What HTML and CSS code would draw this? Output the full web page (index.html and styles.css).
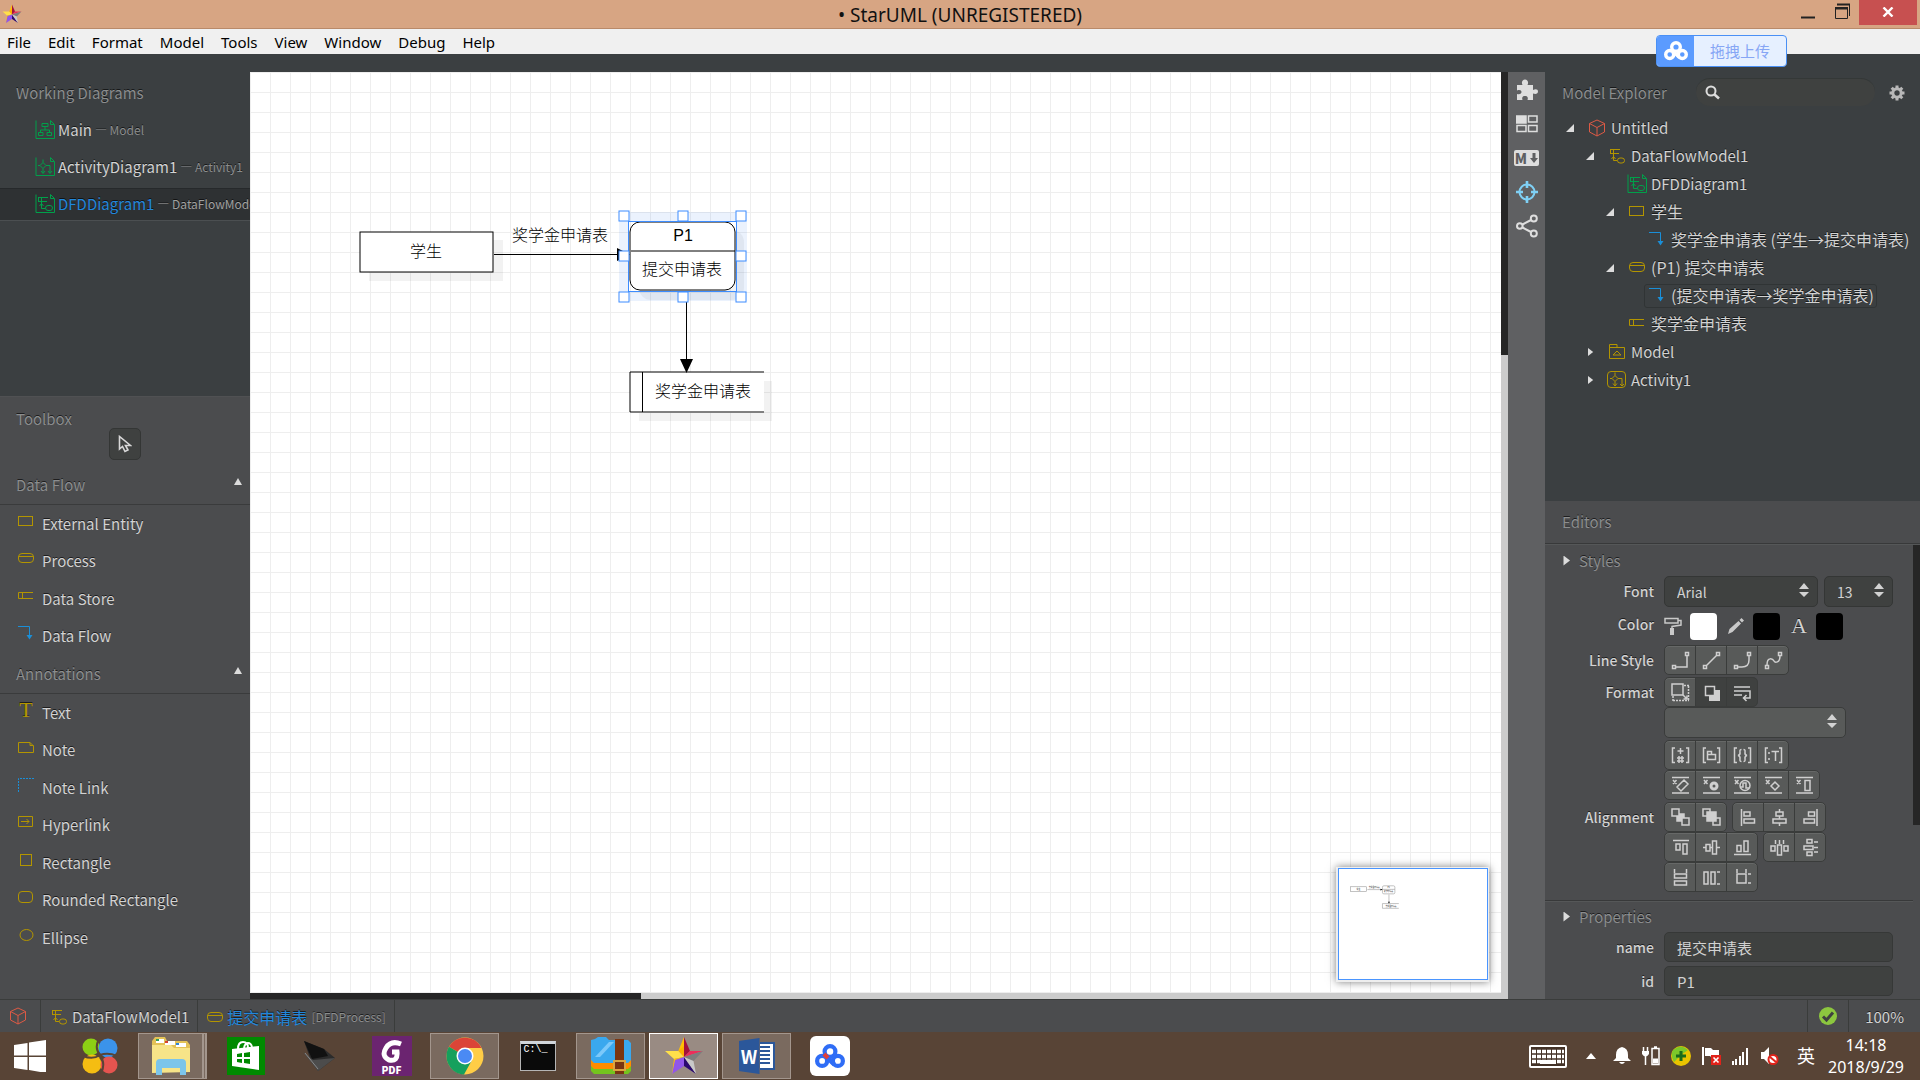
FILE: index.html
```html
<!DOCTYPE html>
<html lang="zh-CN">

<head>
    <meta charset="UTF-8" />
    <meta name="viewport" content="width=device-width, initial-scale=1.0" />
    <title>StarUML (UNREGISTERED)</title>
    <link rel="stylesheet" href="styles.css">
</head>

<body>

    <!-- shared icons -->
    <svg class="sprite" aria-hidden="true">
        <symbol id="i-star" viewBox="0 0 40 40">
            <path d="M20 1V21L14.500 14.500Z" fill="#ffc107" />
            <path d="M20 1V21L26 15Z" fill="#a3123c" />
            <path d="M1 15H14.500L20 21L10 23Z" fill="#ffe04a" />
            <path d="M14.500 14.500L20 21V10Z" fill="#ffb300" />
            <path d="M39 15H26L20 21Z" fill="#ec2d5b" />
            <path d="M39 15L20 21L29.500 25Z" fill="#7d7d7d" />
            <path d="M10 23L20 21L8 38Z" fill="#ffc107" />
            <path d="M20 21V30L8 38L11 24Z" fill="#9156ea" />
            <path d="M20 21V30L32 38Z" fill="#2b0a70" />
            <path d="M20 21L29.500 25L32 38Z" fill="#c9c9c9" />
        </symbol>
        <symbol id="i-cube" viewBox="0 0 18 18">
            <path d="M9 1L16.500 4.500V13L9 17L1.500 13V4.500ZM1.500 4.500L9 8.500L16.500 4.500M9 8.500V17" />
        </symbol>
        <symbol id="i-dfm" viewBox="0 0 18 18">
            <path d="M2 2.500H12M2 6.500H11M2.500 2V7M5.500 2V13.500H9M5.500 9.500L3.500 12M5.500 9.500L7.500 12" />
            <rect x="9.500" y="11" width="7" height="5" rx="2.500" />
        </symbol>
        <symbol id="i-dfd" viewBox="0 0 20 20">
            <path d="M1 .5V18.500H19.500V5M15.500 .5V4.500H19.500L15.500 .5" />
            <path d="M3 3.500H13M3 7.500H12M3.500 3V8M6.500 3V14.500H10M6.500 9.500L4.500 12M6.500 9.500L8.500 12" />
            <rect x="10.500" y="11.500" width="7" height="5" rx="2.500" />
        </symbol>
        <symbol id="i-class" viewBox="0 0 20 20">
            <path d="M1 .5V18.500H19.500V5M15.500 .5V4.500H19.500L15.500 .5" />
            <path d="M7 3.500H13V6.500H7ZM10 6.500V10M5.500 12V10H14.500V12M3.500 12.500H8V15.500H3.500ZM12 12.500H16.500V15.500H12Z" />
        </symbol>
        <symbol id="i-activity" viewBox="0 0 20 20">
            <path d="M1 .5V18.500H19.500V5M15.500 .5V4.500H19.500L15.500 .5" />
            <path d="M8 2.500V5.500L11 8.500L8 11.500L5 8.500L8 5.500M8 11.500V16M6 14L8 16.500L10 14M3 8.500H5M11 8.500H15V16M13 14L15 16.500L17 14" />
        </symbol>
        <symbol id="i-rect" viewBox="0 0 16 16">
            <rect x=".5" y="3.500" width="14" height="9" />
        </symbol>
        <symbol id="i-process" viewBox="0 0 16 16">
            <rect x=".5" y="3.500" width="15" height="9" rx="3.500" />
            <path d="M.5 6.500H15.500" />
        </symbol>
        <symbol id="i-store" viewBox="0 0 16 16">
            <path d="M15 4.500H.5V10.500H15M4.500 4.500V10.500" />
        </symbol>
        <symbol id="i-flow" viewBox="0 0 16 16">
            <path d="M0 1.500H11.500V12" />
            <path d="M8.500 10H14.500L11.500 14.500Z" fill="currentColor" stroke="none" />
        </symbol>
        <symbol id="i-updown" viewBox="0 0 10 14">
            <path d="M0 6L5 0L10 6ZM0 9H10L5 14Z" fill="currentColor" stroke="none" />
        </symbol>
        <symbol id="i-gear" viewBox="0 0 16 16">
            <circle cx="8" cy="8" r="4.200" fill="none" stroke="currentColor" stroke-width="3" />
            <path d="M8 .5V3M8 13V15.500M.5 8H3M13 8H15.500M2.700 2.700L4.500 4.500M11.500 11.500L13.300 13.300M2.700 13.300L4.500 11.500M11.500 4.500L13.300 2.700" stroke="currentColor" stroke-width="3" />
        </symbol>
        <symbol id="i-cloud" viewBox="0 0 24 20">
            <g fill="none" stroke="currentColor" stroke-width="3.400">
                <circle cx="12" cy="6" r="4.300" />
                <circle cx="5.700" cy="13.500" r="4" />
                <circle cx="18.300" cy="13.500" r="4" />
                <path d="M9 10.500L15.500 16.500" />
            </g>
        </symbol>
    </svg>

    <header class="titlebar">
        <svg class="app-icon"><use href="#i-star" /></svg>
        <h1>• StarUML (UNREGISTERED)</h1>
        <div class="window-buttons">
            <button aria-label="Minimize"><svg width="14" height="16"><path d="M0 14.500H14" stroke="#222" stroke-width="2" /></svg></button>
            <button aria-label="Restore"><svg width="15" height="16" fill="none" stroke="#222"><path d="M.5 4.500H12.500V15.500H.5ZM.5 6H12.500M2.500 1.500H14.500V13" stroke-width="1" /><path d="M0 5H13M2 1.500H15" stroke-width="2" /></svg></button>
            <button class="close" aria-label="Close"><svg width="12" height="10"><path d="M1.500 .5L10.500 9.500M10.500 .5L1.500 9.500" stroke="#fff" stroke-width="2.400" /></svg></button>
        </div>
    </header>

    <nav class="menubar">
        <a href="#">File</a>
        <a href="#">Edit</a>
        <a href="#">Format</a>
        <a href="#">Model</a>
        <a href="#">Tools</a>
        <a href="#">View</a>
        <a href="#">Window</a>
        <a href="#">Debug</a>
        <a href="#">Help</a>
    </nav>

    <button class="upload-badge">
        <span class="upload-icon"><svg width="24" height="20"><use href="#i-cloud" /></svg></span>
        <span class="upload-text">拖拽上传</span>
    </button>

    <main class="app">

        <aside class="sidebar-left">
            <section class="working">
                <h2>Working Diagrams</h2>
                <ul>
                    <li><svg class="icon-20 green"><use href="#i-class" /></svg>Main <small>— Model</small></li>
                    <li><svg class="icon-20 green"><use href="#i-activity" /></svg>ActivityDiagram1 <small>— Activity1</small></li>
                    <li class="selected"><svg class="icon-20 green"><use href="#i-dfd" /></svg><span>DFDDiagram1</span> <small>— DataFlowModel1</small></li>
                </ul>
            </section>

            <section class="toolbox">
                <h2>Toolbox</h2>
                <button class="select-tool" aria-label="Select">
                    <svg width="14" height="18" fill="none" stroke="#d8d8d8" stroke-width="1.600"><path d="M1.500 1.500V14L4.500 11.500L7 16.500L10 15L7.500 10.500H12.500Z" /></svg>
                </button>

                <h3>Data Flow <i class="tri-up"></i></h3>
                <ul class="tools">
                    <li><svg class="icon-16 yellow"><use href="#i-rect" /></svg>External Entity</li>
                    <li><svg class="icon-16 yellow"><use href="#i-process" /></svg>Process</li>
                    <li><svg class="icon-16 yellow"><use href="#i-store" /></svg>Data Store</li>
                    <li><svg class="icon-16 blue"><use href="#i-flow" /></svg>Data Flow</li>
                </ul>

                <h3>Annotations <i class="tri-up"></i></h3>
                <ul class="tools">
                    <li><span class="glyph-t">T</span>Text</li>
                    <li><svg class="icon-16 yellow"><path d="M.5 3.500H12L15.500 7V13.500H.5ZM12 3.500V6.500H15.500" /></svg>Note</li>
                    <li><svg class="icon-16 blue"><path d="M.5 15V1.500H16" stroke-dasharray="2 1" /></svg>Note Link</li>
                    <li><svg class="icon-16 yellow"><path d="M.5 2.500H14.500V12.500H.5ZM3 7.500H11M8.500 5L11 7.500L8.500 10" /></svg>Hyperlink</li>
                    <li><svg class="icon-16 yellow"><rect x="2.500" y="2.500" width="11" height="11" /></svg>Rectangle</li>
                    <li><svg class="icon-16 yellow"><rect x=".5" y="2.500" width="14" height="11" rx="3.500" /></svg>Rounded Rectangle</li>
                    <li><svg class="icon-16 yellow"><ellipse cx="8.500" cy="8" rx="6.500" ry="5.500" /></svg>Ellipse</li>
                </ul>
            </section>
        </aside>

        <section class="editor">
            <div class="canvas">
                <svg class="diagram">
                    <g class="shadow">
                        <rect x="119" y="168" width="134" height="41" />
                        <rect x="389" y="158" width="105" height="70" rx="12" />
                        <rect x="389" y="309" width="133" height="40" />
                    </g>
                    <g class="shape">
                        <rect x="110" y="160" width="133" height="40" />
                        <path d="M244 182.500H374" />
                        <path d="M436.500 220V290" />
                        <rect x="380" y="150" width="105" height="68" rx="10" />
                        <path d="M381 179H485" />
                        <rect class="fill" x="380" y="300" width="134" height="41" />
                        <path d="M514 300H380V340H514M392.500 300V340" />
                    </g>
                    <path d="M367 176L380 182.500L367 189ZM430 287H443L436.500 301Z" />
                    <text x="176" y="185">学生</text>
                    <text x="310" y="169">奖学金申请表</text>
                    <text x="433" y="169">P1</text>
                    <text x="432" y="203">提交申请表</text>
                    <text x="453" y="325">奖学金申请表</text>
                    <path class="halo" d="M369 140H497V229H369ZM379 150V220H487V150Z" />
                    <g class="selection">
                        <rect x="378.500" y="149.500" width="108" height="70" />
                        <rect class="handle" x="369" y="139" width="10" height="10" />
                        <rect class="handle" x="428" y="139" width="10" height="10" />
                        <rect class="handle" x="486" y="139" width="10" height="10" />
                        <rect class="handle" x="369" y="179" width="10" height="10" />
                        <rect class="handle" x="486" y="179" width="10" height="10" />
                        <rect class="handle" x="369" y="220" width="10" height="10" />
                        <rect class="handle" x="428" y="220" width="10" height="10" />
                        <rect class="handle" x="486" y="220" width="10" height="10" />
                    </g>
                </svg>
                <div class="minimap">
                    <svg viewBox="0 0 1250 925">
                        <g fill="#fff" stroke="#999" stroke-width="5">
                            <rect x="97" y="150" width="134" height="41" />
                            <path d="M240 174H370M422 215V290" />
                            <rect x="367" y="142" width="105" height="68" rx="12" />
                            <path d="M367 172H472" />
                            <path d="M505 292H367V332H505" />
                        </g>
                        <path d="M350 166L368 174L350 182ZM414 276H430L422 292Z" />
                        <text x="164" y="176">学生</text>
                        <text x="298" y="162">奖学金申请表</text>
                        <text x="420" y="162">P1</text>
                        <text x="420" y="194">提交申请表</text>
                        <text x="440" y="318">奖学金申请表</text>
                    </svg>
                </div>
            </div>
            <div class="scroll-v"></div>
            <div class="scroll-h"></div>
        </section>

        <nav class="toolbar">
            <button aria-label="Extensions">
                <svg width="22" height="22" viewBox="0 0 22 22"><path d="M1 6H6.500C5 3 6.500 .5 9 .5S13 3 11.500 6H17V11C20 9.500 22 10.500 22 12.500S20 15.500 17 14.500V21H11.500C12.500 18 11 17 9 17S5.500 18 6.500 21H1V15C4 16 5.500 14.500 5.500 13S4 10.500 1 11.500Z" fill="#dedede" /></svg>
            </button>
            <button aria-label="Layout">
                <svg width="22" height="18" viewBox="0 0 22 18" fill="none" stroke="#dedede" stroke-width="1.500"><path d="M.5 1H10V8H.5Z" fill="#dedede" /><path d="M12.500 1H21V7H12.500ZM1 10.500H10V16.500H1ZM12.500 10.500H21V16.500H12.500Z" /></svg>
            </button>
            <button class="md" aria-label="Markdown">M<svg width="8" height="10"><path d="M2.500 0H5.500V5H8L4 10L0 5H2.500Z" fill="#5f6062" /></svg></button>
            <button aria-label="Navigator">
                <svg width="22" height="22" viewBox="0 0 22 22" fill="none" stroke="#7fd0f5" stroke-width="2"><circle cx="11" cy="11" r="7.500" /><path d="M11 0V7M11 15V22M0 11H7M15 11H22" stroke-width="2.600" /></svg>
            </button>
            <button aria-label="Relationships">
                <svg width="22" height="24" viewBox="0 0 22 24" fill="none" stroke="#dedede" stroke-width="2"><circle cx="3.800" cy="12" r="2.800" /><circle cx="17.800" cy="4.500" r="3" /><circle cx="17.800" cy="19.500" r="3" /><path d="M6.500 10.500L15 6M6.500 13.500L15 18" /></svg>
            </button>
        </nav>

        <aside class="sidebar-right">
            <section class="explorer">
                <div class="explorer-head">
                    <h2>Model Explorer</h2>
                    <label class="search">
                        <svg width="15" height="15" fill="none" stroke="#dcdcdc"><circle cx="6" cy="6" r="4.500" stroke-width="2" /><path d="M9.500 9.500L14 13.500" stroke-width="2.600" /></svg>
                        <input type="text" aria-label="Search">
                    </label>
                    <button class="gear" aria-label="Settings"><svg width="16" height="16"><use href="#i-gear" /></svg></button>
                </div>

                <ul class="tree">
                    <li>
                        <div class="row"><i class="tri-open"></i><span class="item"><svg class="icon-18 red"><use href="#i-cube" /></svg>Untitled</span></div>
                        <ul>
                            <li>
                                <div class="row"><i class="tri-open"></i><span class="item"><svg class="icon-18 yellow"><use href="#i-dfm" /></svg>DataFlowModel1</span></div>
                                <ul>
                                    <li><div class="row"><i></i><span class="item"><svg class="icon-20 green"><use href="#i-dfd" /></svg>DFDDiagram1</span></div></li>
                                    <li>
                                        <div class="row"><i class="tri-open"></i><span class="item han"><svg class="icon-16 yellow"><use href="#i-rect" /></svg>学生</span></div>
                                        <ul>
                                            <li><div class="row"><i></i><span class="item han"><svg class="icon-16 blue"><use href="#i-flow" /></svg>奖学金申请表 (学生→提交申请表)</span></div></li>
                                        </ul>
                                    </li>
                                    <li>
                                        <div class="row"><i class="tri-open"></i><span class="item han"><svg class="icon-16 yellow"><use href="#i-process" /></svg>(P1) 提交申请表</span></div>
                                        <ul>
                                            <li><div class="row"><i></i><span class="item han current"><svg class="icon-16 blue"><use href="#i-flow" /></svg>(提交申请表→奖学金申请表)</span></div></li>
                                        </ul>
                                    </li>
                                    <li><div class="row"><i></i><span class="item han"><svg class="icon-16 yellow"><use href="#i-store" /></svg>奖学金申请表</span></div></li>
                                </ul>
                            </li>
                            <li><div class="row"><i class="tri-right"></i><span class="item"><svg class="icon-18 yellow"><path d="M1.500 15.500V1.500H9V4.500H16.500V15.500ZM1.500 4.500H9M5 12L9 8L13 12Z" /></svg>Model</span></div></li>
                            <li><div class="row"><i class="tri-right"></i><span class="item"><svg class="icon-20 yellow"><rect x=".5" y="1.500" width="18" height="16" rx="3.500" /><path d="M8 2.500V5.500L11 8.500L8 11.500L5 8.500L8 5.500M8 11.500V15.500M6 13.500L8 16L10 13.500M11 8.500H15V16M13 14L15 16L17 14M3 8.500H5" /></svg>Activity1</span></div></li>
                        </ul>
                    </li>
                </ul>
            </section>

            <section class="editors">
                <h2>Editors</h2>
                <div class="editors-body">
                    <div class="forms">
                        <h3><i class="tri-right"></i>Styles</h3>
                        <div class="field">
                            <label for="font">Font</label>
                            <div class="controls">
                                <div class="select font-name">
                                    <select id="font"><option>Arial</option></select>
                                    <svg><use href="#i-updown" /></svg>
                                </div>
                                <div class="select font-size">
                                    <select aria-label="Font size"><option>13</option></select>
                                    <svg><use href="#i-updown" /></svg>
                                </div>
                            </div>
                        </div>
                        <div class="field">
                            <span class="label">Color</span>
                            <div class="controls colors">
                                <svg width="18" height="18" fill="none" stroke="#c9c9c9" stroke-width="1.500"><path d="M1 1.500H14V6H1ZM14 3.500H17V8L8 9.500V11" /><path d="M6 11H10V18H6Z" fill="#c9c9c9" stroke="none" /></svg>
                                <button class="swatch white" aria-label="Fill color"></button>
                                <svg width="18" height="18" fill="#c9c9c9"><path d="M1 17L2.500 12L11.500 4L14 6.500L5.500 15ZM12.500 3L14.500 1L17 3.500L15 5.500Z" /></svg>
                                <button class="swatch" aria-label="Line color"></button>
                                <span class="glyph-a">A</span>
                                <button class="swatch" aria-label="Text color"></button>
                            </div>
                        </div>
                        <div class="field">
                            <span class="label">Line Style</span>
                            <div class="controls">
                                <div class="group">
                                    <button aria-label="Rectilinear"><svg><path d="M1.500 14.500H4.500V17.500H1.500ZM14.500 1.500H17.500V4.500H14.500ZM5 16H16V5" /></svg></button>
                                    <button aria-label="Oblique"><svg><path d="M1.500 14.500H4.500V17.500H1.500ZM14.500 1.500H17.500V4.500H14.500ZM4.500 14.500L14.500 4.500" /></svg></button>
                                    <button aria-label="Rounded rectilinear"><svg><path d="M1.500 14.500H4.500V17.500H1.500ZM14.500 1.500H17.500V4.500H14.500ZM5 16H9Q16 16 16 9V5" /></svg></button>
                                    <button aria-label="Curved"><svg><path d="M1.500 14.500H4.500V17.500H1.500ZM14.500 1.500H17.500V4.500H14.500ZM3 14C3 5 9 8 10 10S16 12 16 5" /></svg></button>
                                </div>
                            </div>
                        </div>
                        <div class="field">
                            <span class="label">Format</span>
                            <div class="controls stacked">
                                <div class="group">
                                    <button aria-label="Auto resize"><svg><path d="M1 1H12V12H1Z" /><path d="M13 2.500H18M2 17.500H18M17.500 3V17M2 13V18" stroke-dasharray="2 1" /><path d="M12 12L16 16M16 12.500V16H12.500" /></svg></button>
                                    <button class="on" aria-label="Shadow"><svg><path d="M7 7H18V18H7Z" fill="#cfcfcf" stroke="none" /><path d="M3.500 3.500H12.500V12.500H3.500Z" fill="#3f4140" /></svg></button>
                                    <button class="on" aria-label="Word wrap"><svg><path d="M1 4H17M1 8H17V15H11M13.500 12L10.500 15L13.500 18M1 12H9" /></svg></button>
                                </div>
                                <div class="select stereotype">
                                    <select aria-label="Stereotype display"><option></option></select>
                                    <svg><use href="#i-updown" /></svg>
                                </div>
                                <div class="group">
                                    <button aria-label="Visibility"><svg><path d="M4 2H1.500V16.500H4M15 2H17.500V16.500H15M6.500 5H12.500M9.500 2V8M8 10V17M11 10V17M6 12H13M6 15H13" /></svg></button>
                                    <button aria-label="Namespace"><svg><path d="M4 2H1.500V16.500H4M15 2H17.500V16.500H15M5.500 13.500V5.500H9.500V8.500H13.500V13.500ZM5.500 8.500H9.500" /></svg></button>
                                    <button aria-label="Property"><svg><path d="M4 2H1.500V16.500H4M15 2H17.500V16.500H15M8.500 3.500Q6.500 3.500 7 6Q7.500 9 5 9.500Q7.500 10 7 13Q6.500 15.500 8.500 15.500M10.500 3.500Q12.500 3.500 12 6Q11.500 9 14 9.500Q11.500 10 12 13Q12.500 15.500 10.500 15.500" /></svg></button>
                                    <button aria-label="Type"><svg><path d="M4 2H1.500V16.500H4M15 2H17.500V16.500H15M7.500 5.500H15M11.500 5.500V15M5 6V8M5 12V14" /></svg></button>
                                </div>
                                <div class="group">
                                    <button aria-label="Suppress attributes"><svg><path d="M1 1.500H18M1 17H18M2 4L5.500 8M5.500 4L2 8M6 11L13 4L17 8L10 15Z" /></svg></button>
                                    <button aria-label="Suppress operations"><svg><path d="M1 1.500H18M1 17H18M2 4L5.500 8M5.500 4L2 8" /><circle cx="12" cy="10" r="3" stroke-width="3" /></svg></button>
                                    <button aria-label="Suppress receptions"><svg><path d="M1 1.500H18M1 17H18M2 4L5.500 8M5.500 4L2 8M7.500 11H10V7H13V12H16" /><circle cx="12" cy="9.500" r="5" /></svg></button>
                                    <button aria-label="Suppress literals"><svg><path d="M1 1.500H18M1 17H18M2 4L5.500 8M5.500 4L2 8M7 10L11 6L15 10L11 14Z" /></svg></button>
                                    <button aria-label="Suppress columns"><svg><path d="M1 1.500H18M1 17H18M2 4L5.500 8M5.500 4L2 8M10 4.500H15V14.500H10Z" /></svg></button>
                                </div>
                            </div>
                        </div>
                        <div class="field">
                            <span class="label">Alignment</span>
                            <div class="controls stacked">
                                <div class="groups">
                                    <div class="group">
                                        <button aria-label="Send to back"><svg><path d="M6 6H13V13H6Z" fill="#cfcfcf" /><path d="M1 1H8V8H1ZM11 10H18V17H11Z" fill="#585a59" /></svg></button>
                                        <button aria-label="Bring to front"><svg><path d="M1 1H8V8H1ZM11 10H18V17H11Z" /><path d="M5 4H14V13H5Z" fill="#cfcfcf" /></svg></button>
                                    </div>
                                    <div class="group">
                                        <button aria-label="Align left"><svg><path d="M2.500 1V18M5 4H11V8H5ZM5 11H15.500V15H5Z" /></svg></button>
                                        <button aria-label="Align center"><svg><path d="M9.500 1V4M9.500 8V11M9.500 15V18M6 4H13V8H6ZM3 11H16V15H3Z" /></svg></button>
                                        <button aria-label="Align right"><svg><path d="M16 1V18M7.500 4H13.500V8H7.500ZM3 11H13.500V15H3Z" /></svg></button>
                                    </div>
                                </div>
                                <div class="groups">
                                    <div class="group">
                                        <button aria-label="Align top"><svg><path d="M2 2.500H18M5 6H9V12H5ZM12 6H16V16H12Z" /></svg></button>
                                        <button aria-label="Align middle"><svg><path d="M1 9.500H4M8 9.500H10M14 9.500H18M4 6.500H8V13H4ZM10.500 3H14.500V16H10.500Z" /></svg></button>
                                        <button aria-label="Align bottom"><svg><path d="M1 16.500H18M4 7.500H8V13.500H4ZM11 3H15V13.500H11Z" /></svg></button>
                                    </div>
                                    <div class="group">
                                        <button aria-label="Space equally, horizontally"><svg><path d="M1 8H5V13H1ZM7.500 7H11.500V17H7.500ZM14 8H18V13H14ZM5.500 2V6M9.500 2V6M13.500 2V6" /></svg></button>
                                        <button aria-label="Space equally, vertically"><svg><path d="M6 1.500H11V5H6ZM3 8H12V11.500H3ZM6 14H11V17.500H6ZM13 4H17M13 9.500H17M13 14H17" /></svg></button>
                                    </div>
                                </div>
                                <div class="group">
                                    <button aria-label="Set width equally"><svg><path d="M3.500 1V5M15.500 1V5M3.500 6H15.500V10H3.500ZM3.500 13H15.500V17H3.500Z" /></svg></button>
                                    <button aria-label="Set height equally"><svg><path d="M2 4H6V16H2ZM9 4H13V16H9ZM15 4H18M15 16H18" /></svg></button>
                                    <button aria-label="Set size equally"><svg><path d="M4 1V5M13 1V5M4 6H13V15H4ZM15 6H18M15 15H18" /></svg></button>
                                </div>
                            </div>
                        </div>

                        <h3 class="divided"><i class="tri-right"></i>Properties</h3>
                        <div class="field property">
                            <label for="prop-name">name</label>
                            <input id="prop-name" type="text" value="提交申请表">
                        </div>
                        <div class="field property">
                            <label for="prop-id">id</label>
                            <input id="prop-id" type="text" value="P1">
                        </div>
                    </div>
                    <div class="scroll-editors"></div>
                </div>
            </section>
        </aside>
    </main>

    <footer class="statusbar">
        <a class="crumb" href="#" aria-label="Project"><svg class="icon-18 red"><use href="#i-cube" /></svg></a>
        <a class="crumb" href="#"><svg class="icon-18 yellow"><use href="#i-dfm" /></svg>DataFlowModel1</a>
        <a class="crumb active" href="#"><svg class="icon-16 yellow"><use href="#i-process" /></svg><span>提交申请表</span> <small>[DFDProcess]</small></a>
        <span class="validity"><svg width="18" height="18"><circle cx="9" cy="9" r="9" fill="#8cc63f" /><path d="M4 9.500L7.500 13L14 5.500" fill="none" stroke="#3f4140" stroke-width="3" /></svg></span>
        <span class="zoom">100%</span>
    </footer>

    <footer class="taskbar">
        <button class="start" aria-label="Start">
            <svg width="32" height="32" fill="#fff"><path d="M0 5L13.500 3V15.500H0ZM15 2.500L32 0V15.500H15ZM0 17H13.500V30L0 28ZM15 17H32V33L15 30Z" /></svg>
        </button>
        <button class="task" aria-label="Browser">
            <svg width="36" height="36"><circle cx="9" cy="9" r="8.500" fill="#8ccf14" /><circle cx="26" cy="10" r="9.500" fill="#3b93ea" /><circle cx="10" cy="26" r="9.500" fill="#f5bd12" /><circle cx="27" cy="27" r="8.500" fill="#e5544f" /><path d="M17 1Q12 10 18 17Q26 14 35 18M18 17Q11 22 1 18M18 17Q24 25 19 36" fill="none" stroke="#584436" stroke-width="2" /></svg>
        </button>
        <button class="task open stack" aria-label="File Explorer">
            <svg width="40" height="38"><path d="M1 4L4 0H14L16 4H36L39 8V35H1Z" fill="#e3c257" /><path d="M5 2H13V6H5ZM14 4H24V8H14ZM25 6H35V10H25Z" fill="#fff" /><path d="M5 2H8V4H5Z" fill="#2e9f5b" /><path d="M14 4H17V6H14Z" fill="#d9432f" /><path d="M25 6H28V8H25Z" fill="#2f86d9" /><path d="M1 8H20L23 11H39V35L1 36Z" fill="#f7e488" /><path d="M5 38V26Q5 22 9 22H31Q35 22 35 26V38H29V31H11V38Z" fill="#7cc5ea" /></svg>
        </button>
        <button class="task" aria-label="Store">
            <svg width="38" height="38"><path d="M0 0H38V38H0Z" fill="#008a00" /><path d="M5 12L32 9V33L5 29Z" fill="#fff" /><path d="M11 12Q11 5 16 5T21 11M17 11Q18 6 21 6T25 10" fill="none" stroke="#fff" stroke-width="2" /><path d="M10 17L15 16V20H10ZM17 16L23 15V20H17ZM10 22H15V26L10 25ZM17 22H23V27L17 26Z" fill="#008a00" /></svg>
        </button>
        <button class="task" aria-label="Laptop">
            <svg width="34" height="32"><path d="M2 1L22 9L33 18L16 31L9 21Z" fill="#2b2b2b" /><path d="M2 1L22 9L26 16L10 19Z" fill="#111" /><path d="M1 12L11 20L33 18L16 31Z" fill="#4c4c4c" /><path d="M3 13L16 29" stroke="#888" /></svg>
        </button>
        <button class="task" aria-label="PDF">
            <span class="pdf"><svg width="24" height="24" fill="none" stroke="#fff" stroke-width="5"><path d="M21 4Q11 0 6 8T9 20Q18 22 17 12H12" /></svg>PDF</span>
        </button>
        <button class="task open" aria-label="Chrome">
            <svg width="38" height="38" viewBox="0 0 38 38"><circle cx="19" cy="19" r="18.500" fill="#ffcd46" /><path d="M19 19L3 9.700A18.500 18.500 0 0 1 35.500 11H19Z" fill="#db4437" /><path d="M19 19L3 9.700A18.500 18.500 0 0 0 18 37.500L26 23Z" fill="#16a05d" /><circle cx="19" cy="19" r="8.500" fill="#fff" /><circle cx="19" cy="19" r="7" fill="#4a8af4" /></svg>
        </button>
        <button class="task" aria-label="Command Prompt">
            <span class="cmd">C:\_</span>
        </button>
        <button class="task open" aria-label="Archive">
            <svg width="40" height="38"><path d="M0 26H40V34L37 37H3L0 34Z" fill="#74c41e" /><path d="M0 22H40V29L37 32H3L0 29Z" fill="#ff8c00" /><path d="M0 3L4 2L7 0H15L18 3H37L40 6V23L37 26H3L0 23Z" fill="#3aa8ee" /><path d="M4 20L18 5H23L9 20Z" fill="#7cc9fa" /><path d="M24 2H33V37H24Z" fill="#7a3510" /><path d="M23 24H34V33H23Z" fill="none" stroke="#d9a441" stroke-width="2" /></svg>
        </button>
        <button class="task open active" aria-label="StarUML">
            <svg width="40" height="40"><use href="#i-star" /></svg>
        </button>
        <button class="task open" aria-label="Word">
            <span class="word"><b>W</b><svg width="15" height="28"><path d="M0 0H15V28H0Z" fill="#2b579a" /><path d="M0 2H13V26H0Z" fill="#fff" /><path d="M0 5H10M0 9H10M0 13H10M0 17H10M0 21H10" stroke="#2b579a" stroke-width="2" /></svg></span>
        </button>
        <button class="task" aria-label="Netdisk">
            <span class="netdisk"><svg width="30" height="25"><use href="#i-cloud" /><path d="M9 10L13 14" stroke="#e2403a" stroke-width="4" /></svg></span>
        </button>

        <div class="tray">
            <svg width="38" height="23"><rect x="1" y="1" width="36" height="21" rx="1" fill="#443328" stroke="#fff" stroke-width="2" /><path d="M3 6.500H35M3 11.500H35M3 16.500H35" stroke="#fff" stroke-width="3.600" stroke-dasharray="4 1" /><path d="M11 17H27" stroke="#fff" stroke-width="4" /></svg>
            <svg class="up" width="10" height="6"><path d="M0 6L5 0L10 6Z" fill="#fff" /></svg>
            <svg width="18" height="18" fill="#fff"><path d="M9 0Q15 1 15 8V11L18 14H0L3 11V8Q3 1 9 0ZM6 15H12Q9 19 6 15Z" /></svg>
            <svg width="18" height="20" fill="none" stroke="#fff"><path d="M1.500 1V5M5.500 1V5M3.500 10V19" stroke-width="1.500" /><path d="M0 5H7V8Q3.500 13 0 8Z" fill="#fff" stroke="none" /><path d="M10 2.500H17V18.500H10ZM12 1H15" stroke-width="1.500" /><path d="M11 15H16" stroke-width="5" /></svg>
            <svg width="20" height="20"><circle cx="10" cy="10" r="10" fill="#e9c400" /><path d="M2 4Q10 -3 17 4L10 9L3 16Q-1 9 2 4Z" fill="#7cc82a" /><path d="M10 5V15M5 10H15" stroke="#1b6b1b" stroke-width="3" /></svg>
            <svg width="19" height="20"><path d="M1 1V19" stroke="#fff" stroke-width="2" /><path d="M3 2H9L11 4H17V12H10L8 10H3Z" fill="#fff" /><rect x="9" y="9" width="10" height="10" fill="#e2231a" /><path d="M11.500 11.500L16.500 16.500M16.500 11.500L11.500 16.500" stroke="#fff" stroke-width="1.600" /></svg>
            <svg width="17" height="17" fill="#fff"><path d="M0 13H2V17H0ZM3 11H5V17H3ZM7 8H9V17H7ZM10 4H12V17H10ZM14 0H16V17H14Z" /></svg>
            <svg width="19" height="20"><path d="M1 6H4L9 1V18L4 13H1Z" fill="#fff" /><circle cx="13" cy="13.500" r="4.500" fill="#fff" stroke="#e2231a" stroke-width="2" /><path d="M10 11L16 16" stroke="#e2231a" stroke-width="2" /></svg>
            <span class="ime">英</span>
            <time>14:18<br>2018/9/29</time>
        </div>
    </footer>

</body>

</html>
```

FILE: styles.css
```css
* {
    box-sizing: border-box;
}

body {
    margin: 0;
    height: 100vh;
    display: flex;
    flex-direction: column;
    overflow: hidden;
    background: #3b3f41;
    color: #d2d2d2;
    font-family: "Noto Sans CJK SC", sans-serif;
    font-size: 15px;
    font-weight: 400;
    line-height: 20px;
}

ul {
    list-style: none;
    margin: 0;
    padding: 0;
}

h1,
h2,
h3 {
    margin: 0;
    font-weight: 400;
}

a {
    color: inherit;
    text-decoration: none;
}

button,
input,
select {
    margin: 0;
    padding: 0;
    border: none;
    background: none;
    color: inherit;
    font: inherit;
}

svg {
    display: block;
    flex: none;
}

.sprite {
    display: none;
}

.icon-16,
.icon-18,
.icon-20 {
    fill: none;
    stroke: currentColor;
}

.icon-16 {
    width: 16px;
    height: 16px;
}

.icon-18 {
    width: 18px;
    height: 18px;
}

.icon-20 {
    width: 20px;
    height: 20px;
}

.green {
    color: #00a04a;
}

.yellow {
    color: #b39500;
}

.blue {
    color: #1a8fd8;
}

.red {
    color: #dd5a45;
}

/* window frame */
.titlebar {
    position: relative;
    flex: none;
    display: flex;
    align-items: center;
    justify-content: center;
    height: 29px;
    background: #d7a583;
    border-bottom: 1px solid #b98a6a;
    color: #111;
    font-family: "Noto Sans", sans-serif;
}

.titlebar h1 {
    padding-top: 1px;
    font-size: 19px;
    line-height: 28px;
}

.app-icon {
    position: absolute;
    left: 2px;
    top: 4px;
    width: 20px;
    height: 20px;
}

.window-buttons {
    position: absolute;
    top: 0;
    right: 3px;
    display: flex;
}

.window-buttons button {
    display: flex;
    align-items: center;
    justify-content: center;
    width: 34px;
    height: 25px;
    padding-bottom: 4px;
}

.window-buttons .close {
    width: 58px;
    padding: 0 0 2px;
    background: #c75050;
}

.menubar {
    flex: none;
    display: flex;
    gap: 17px;
    height: 25px;
    padding: 0 7px;
    background: #f0f0f0;
    color: #000;
    font-family: "Noto Sans", sans-serif;
    line-height: 26px;
}

.upload-badge {
    position: absolute;
    top: 35px;
    right: 133px;
    display: flex;
    width: 131px;
    height: 32px;
    border: 1px solid #4a90f5;
    border-radius: 4px;
    overflow: hidden;
    background: #e6f0ff;
    color: #86a6f5;
}

.upload-icon {
    display: flex;
    align-items: center;
    justify-content: center;
    width: 37px;
    background: #5b9bff;
    color: #fff;
}

.upload-text {
    flex: 1;
    line-height: 30px;
}

/* main layout */
.app {
    flex: 1;
    min-height: 0;
    display: grid;
    grid-template-columns: 250px 1fr 37px 375px;
    grid-template-rows: minmax(0, 1fr);
    padding-top: 18px;
    text-shadow: 0 -1px 0 rgba(0, 0, 0, 0.6);
}

.app h2,
.app h3 {
    color: #8b8d8e;
    font-size: 15px;
    white-space: nowrap;
}

.sidebar-left {
    display: grid;
    grid-template-columns: minmax(0, 1fr);
    grid-template-rows: 324px 1fr;
    min-width: 0;
}

.working h2 {
    padding-left: 16px;
    line-height: 42px;
}

.working li {
    display: flex;
    align-items: center;
    gap: 3px;
    height: 33px;
    margin-bottom: 4px;
    padding: 0 0 2px 35px;
    overflow: hidden;
    white-space: nowrap;
    border: solid transparent;
    border-width: 1px 0;
}

.working small {
    color: #8b8d8e;
    font-size: 12px;
}

.working .selected {
    background: #2e3133;
    border-top-color: #26292b;
    border-bottom-color: #4b4f51;
}

.working .selected span {
    color: #2287dc;
}

.working .selected small {
    color: #a0a0a0;
}

.toolbox {
    padding-top: 13px;
    background: #4b4c4e;
    border-top: 1px solid #505153;
}

.toolbox h2 {
    padding-left: 16px;
    line-height: 18px;
}

.select-tool {
    display: flex;
    align-items: center;
    justify-content: center;
    width: 32px;
    height: 32px;
    margin: 0 auto 6px;
    border: 1px solid #343635;
    border-radius: 5px;
    background: #3f4140;
}

.toolbox h3 {
    display: flex;
    justify-content: space-between;
    padding: 0 8px 0 16px;
    line-height: 38px;
    border-bottom: 1px solid #3a3b3c;
}

.tri-up {
    margin-top: 12px;
    width: 8px;
    height: 7px;
    background: #dcdcdc;
    clip-path: polygon(0 100%, 50% 0, 100% 100%);
}

.tools li {
    display: flex;
    align-items: center;
    gap: 8px;
    height: 37px;
    padding-left: 18px;
}

.tools li:nth-child(even) {
    height: 38px;
}

.tools svg {
    margin-bottom: 6px;
}

.glyph-t {
    width: 16px;
    margin-bottom: 6px;
    color: #b39500;
    font-family: "Liberation Serif", serif;
    font-size: 22px;
    text-align: center;
}

/* diagram editor */
.editor {
    display: grid;
    grid-template-columns: 1fr 7px;
    grid-template-rows: 1fr 6px;
    min-width: 0;
    background: #ccc;
}

.canvas {
    position: relative;
    background-color: #fff;
    background-image:
        linear-gradient(#eee 1px, transparent 1px),
        linear-gradient(90deg, #eee 1px, transparent 1px);
    background-size: 20px 20px;
    text-shadow: none;
}

.diagram {
    width: 100%;
    height: 100%;
    font-family: "Liberation Sans", "Noto Sans CJK SC", sans-serif;
    font-size: 16px;
    font-weight: 300;
    text-anchor: middle;
}

.diagram .shadow {
    fill: rgba(0, 0, 0, 0.05);
}

.diagram .shape {
    fill: #fff;
    stroke: #000;
}

.diagram .shape .fill {
    stroke: none;
}

.diagram .halo {
    fill: rgba(60, 130, 240, 0.1);
    fill-rule: evenodd;
}

.selection {
    fill: none;
    stroke: #3c8cff;
}

.selection .handle {
    fill: #fff;
}

.minimap {
    position: absolute;
    right: 12px;
    bottom: 11px;
    width: 153px;
    padding: 1px 1px 2px 2px;
    background: #eee;
    box-shadow: 0 0 8px rgba(0, 0, 0, 0.5);
}

.minimap svg {
    width: 100%;
    border: 1px solid #4a95ff;
    background: #fff;
    font-size: 16px;
    text-anchor: middle;
}

.scroll-v {
    background: linear-gradient(#262626, #262626) no-repeat 0 0 / 100% 283px;
}

.scroll-h {
    grid-column: 1 / 3;
    background: linear-gradient(#262626, #262626) no-repeat 0 0 / 391px 100%;
}

.toolbar {
    display: flex;
    flex-direction: column;
    align-items: center;
    padding-top: 1px;
    background: #5f6062;
}

.toolbar button {
    display: flex;
    align-items: center;
    justify-content: center;
    width: 37px;
    height: 34px;
}

.toolbar .md {
    gap: 3px;
    width: 25px;
    height: 16px;
    margin: 9px 0;
    border-radius: 2px;
    background: #dedede;
    color: #5f6062;
    font-size: 14px;
    font-weight: 900;
    line-height: 16px;
    text-shadow: none;
}

/* model explorer */
.sidebar-right {
    display: grid;
    grid-template-columns: minmax(0, 1fr);
    grid-template-rows: 429px 1fr;
    min-width: 0;
    min-height: 0;
}

.explorer-head {
    display: flex;
    align-items: center;
    height: 42px;
    padding: 0 15px 0 17px;
}

.search {
    flex: 1;
    display: flex;
    align-items: center;
    gap: 8px;
    min-width: 0;
    height: 28px;
    margin: 0 14px 2px 29px;
    padding: 0 9px;
    border-radius: 14px;
    background: #3f4140;
    border-top: 1px solid #343837;
}

.search input {
    flex: 1;
    width: 0;
    outline: none;
}

.gear {
    color: #b8b8b8;
}

.tree ul {
    padding-left: 20px;
}

.row {
    display: flex;
    align-items: center;
    height: 28px;
    white-space: nowrap;
}

.row > i {
    width: 8px;
    height: 8px;
    margin: 0 10px 0 21px;
}

.tri-open {
    background: #dcdcdc;
    clip-path: polygon(100% 0, 100% 100%, 0 100%);
}

.tri-right {
    background: #dcdcdc;
    clip-path: polygon(25% 0, 90% 50%, 25% 100%);
}

.item {
    display: flex;
    align-items: center;
    height: 24px;
    padding-right: 4px;
    border: 1px solid transparent;
    border-radius: 3px;
}

.item.han {
    padding: 0 2px 2px 0;
    font-size: 16px;
}

.item .icon-16 {
    margin: 0 6px 0 4px;
}

.item .icon-18 {
    margin: 0 5px 0 3px;
}

.item .icon-20 {
    margin: 0 4px 0 2px;
}

.item.current {
    border-color: #303435;
}

/* editors */
.editors {
    display: flex;
    flex-direction: column;
    min-height: 0;
    background: #4b4c4e;
}

.editors h2 {
    flex: none;
    padding-left: 17px;
    line-height: 42px;
    border-bottom: 1px solid #38393a;
}

.editors-body {
    flex: 1;
    min-height: 0;
    display: grid;
    grid-template-columns: 1fr 7px;
    border-top: 1px solid #555758;
    overflow: hidden;
}

.scroll-editors {
    background: linear-gradient(#262626, #262626) no-repeat 0 0 / 100% 280px;
}

.forms h3 {
    display: flex;
    align-items: center;
    gap: 8px;
    height: 31px;
    padding-left: 16px;
}

.forms h3 .tri-right {
    width: 10px;
    height: 10px;
}

.forms .divided {
    margin-top: 8px;
    height: 32px;
    border-top: 1px solid #38393a;
    box-shadow: inset 0 1px 0 #555758;
}

.field {
    display: grid;
    grid-template-columns: 109px 1fr;
    gap: 10px;
    margin-bottom: 2px;
    padding-right: 20px;
}

.field > label,
.field > .label {
    font-size: 14px;
    font-weight: 500;
    line-height: 30px;
    text-align: right;
}

.controls {
    display: flex;
    gap: 6px;
}

.stacked {
    flex-direction: column;
    gap: 0;
}

.groups {
    display: flex;
    gap: 5px;
}

.select {
    display: grid;
    align-items: center;
    height: 31px;
}

.select > * {
    grid-area: 1 / 1;
}

.select select {
    appearance: none;
    width: 100%;
    height: 31px;
    padding-left: 12px;
    border: 1px solid #343635;
    border-radius: 5px;
    background: #3f4140;
    font-size: 14px;
}

.select svg {
    justify-self: end;
    width: 10px;
    height: 14px;
    margin: 0 9px 3px 0;
    pointer-events: none;
}

.font-name {
    width: 154px;
}

.font-size {
    width: 69px;
}

.stereotype {
    width: 182px;
    margin-bottom: 2px;
}

.stereotype select {
    border-color: #3a3c3b;
    background: #585a59;
}

.colors {
    align-items: center;
    gap: 0;
    height: 34px;
}

.swatch {
    width: 27px;
    height: 27px;
    margin: 0 10px 0 8px;
    border-radius: 4px;
    background: #000;
}

.swatch.white {
    background: #fff;
}

.glyph-a {
    width: 18px;
    font-family: "Liberation Serif", serif;
    font-size: 22px;
    text-align: center;
}

.group {
    display: flex;
}

.group button {
    display: flex;
    align-items: center;
    justify-content: center;
    width: 32px;
    height: 30px;
    margin-right: -1px;
    border: 1px solid #3a3c3b;
    background: #585a59;
    box-shadow: inset 0 1px 0 #666867;
}

.group button:first-child {
    border-radius: 5px 0 0 5px;
}

.group button:last-child {
    margin-right: 0;
    border-radius: 0 5px 5px 0;
}

.group button.on {
    background: #3f4140;
    box-shadow: none;
}

.group svg {
    width: 19px;
    height: 19px;
    fill: none;
    stroke: #cfcfcf;
    stroke-width: 1.5px;
}

.property {
    margin-bottom: 4px;
}

.property input {
    min-width: 0;
    height: 30px;
    padding: 0 12px;
    border: 1px solid #363837;
    border-radius: 5px;
    background: #3f4140;
}

/* status bar */
.statusbar {
    flex: none;
    display: flex;
    height: 33px;
    background: #4b4c4e;
    border-top: 1px solid #3a3c3b;
    text-shadow: 0 -1px 0 rgba(0, 0, 0, 0.6);
}

.crumb {
    display: flex;
    align-items: center;
    gap: 4px;
    padding: 2px 8px 0 9px;
    border-right: 1px solid #3a3c3b;
}

.crumb:first-child {
    padding: 0 13px 0 9px;
}

.crumb span {
    color: #2287dc;
    font-size: 16px;
}

.crumb small {
    color: #8b8d8e;
    font-size: 12px;
}

.validity {
    display: flex;
    align-items: center;
    margin-left: auto;
    padding: 0 11px;
    border: solid #3a3c3b;
    border-width: 0 1px;
}

.zoom {
    padding: 0 16px;
    line-height: 34px;
}

/* windows taskbar */
.taskbar {
    flex: none;
    display: flex;
    align-items: center;
    gap: 4px;
    height: 48px;
    background: #584436;
    color: #fff;
}

.start {
    width: 61px;
    padding-left: 14px;
}

.task {
    display: flex;
    align-items: center;
    justify-content: center;
    width: 69px;
    height: 46px;
}

.task.open {
    border: 1px solid #a3968d;
    background: #7a6a5f;
}

.task.active {
    border-color: #fff;
    background: #998b83;
}

.task.stack {
    border-right: 5px double #a3968d;
}

.pdf {
    display: flex;
    flex-direction: column;
    align-items: center;
    width: 40px;
    height: 40px;
    padding-top: 4px;
    background: #6b2470;
    font-size: 10px;
    font-weight: 900;
    line-height: 11px;
}

.cmd {
    width: 36px;
    height: 30px;
    padding-left: 3px;
    border: 1px solid #b5b5b5;
    border-top: 3px solid #d0d5da;
    background: #0a0a0a;
    font-family: "Liberation Mono", monospace;
    font-size: 10px;
    line-height: 12px;
    text-align: left;
}

.word {
    display: flex;
    align-items: center;
}

.word b {
    width: 21px;
    height: 36px;
    background: #2b579a;
    clip-path: polygon(0 8%, 100% 0, 100% 100%, 0 92%);
    font-size: 18px;
    line-height: 36px;
}

.netdisk {
    display: flex;
    align-items: center;
    justify-content: center;
    width: 40px;
    height: 40px;
    border-radius: 6px;
    background: #fff;
    color: #2f6df6;
}

.tray {
    display: flex;
    align-items: center;
    gap: 11px;
    margin-left: auto;
    padding-right: 16px;
    font-family: "Noto Sans", "Noto Sans CJK SC", sans-serif;
}

.tray .up {
    margin: 0 6px 0 8px;
}

.ime {
    margin: 0 2px 0 7px;
    font-size: 18px;
}

.tray time {
    font-size: 16px;
    line-height: 22px;
    text-align: center;
}
```
